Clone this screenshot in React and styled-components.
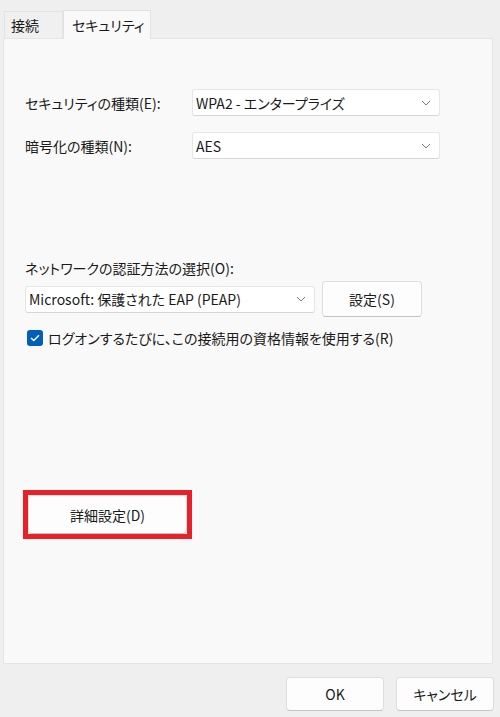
import React from "react";
import styled, { createGlobalStyle } from "styled-components";

const GlobalStyle = createGlobalStyle`
  html, body {
    margin: 0;
    padding: 0;
    background: #efefef;
    font-family: "Noto Sans CJK JP", "Noto Sans", sans-serif;
    font-feature-settings: "palt";
    font-size: 14px;
    color: #1a1a1a;
  }
`;

const Dialog = styled.div`
  width: 500px;
  height: 717px;
  display: flex;
  flex-direction: column;
  box-sizing: border-box;
`;

const TabStrip = styled.div`
  display: flex;
  align-items: flex-end;
  height: 38px;
  padding-left: 4px;
`;

const Tab = styled.div`
  box-sizing: border-box;
  min-width: ${(p) => (p.active ? "80px" : "59px")};
  height: ${(p) => (p.active ? "29px" : "27px")};
  padding: 0 6px 0 ${(p) => (p.active ? "8px" : "6px")};
  display: flex;
  align-items: center;
  white-space: nowrap;
  background: ${(p) => (p.active ? "#f9f9f9" : "#f0f0f0")};
  border: 1px solid #e2e2e2;
  border-bottom: none;
  margin-bottom: ${(p) => (p.active ? "-1px" : "0")};
  position: relative;
  z-index: ${(p) => (p.active ? 2 : 1)};
  color: #1a1a1a;
`;

const Panel = styled.div`
  box-sizing: border-box;
  height: 626px;
  margin: 0 7px 0 3px;
  background: #f9f9f9;
  border: 1px solid #e4e4e4;
  padding: 50px 0 0 21px;
  display: flex;
  flex-direction: column;
`;

const FieldGrid = styled.div`
  display: grid;
  grid-template-columns: 167px 248px;
  row-gap: 16px;
  align-items: center;
`;

const Label = styled.div`
  line-height: 20px;
  white-space: nowrap;
`;

const SelectBox = styled.div`
  box-sizing: border-box;
  width: ${(p) => p.width || "248px"};
  height: 27px;
  background: #ffffff;
  border: 1px solid #e6e6e6;
  border-bottom-color: #d6d6d6;
  border-radius: 3px;
  display: flex;
  align-items: center;
  justify-content: space-between;
  padding: 0 8px 0 3px;
  white-space: nowrap;
`;

const Chevron = () => (
  <svg width="10" height="6" viewBox="0 0 10 6">
    <path d="M1 1 L5 5 L9 1" fill="none" stroke="#7a7a7a" strokeWidth="1" />
  </svg>
);

const AuthSection = styled.div`
  margin-top: 99px;
  display: flex;
  flex-direction: column;
`;

const AuthRow = styled.div`
  display: flex;
  align-items: center;
  gap: 7px;
  margin-top: 3px;
`;

const Button = styled.button`
  box-sizing: border-box;
  width: ${(p) => p.width || "100px"};
  height: ${(p) => p.height || "36px"};
  background: #fdfdfd;
  border: 1px solid #dedede;
  border-bottom-color: #c4c4c4;
  border-radius: 4px;
  font-family: inherit;
  font-feature-settings: "palt";
  font-size: 14px;
  color: #1a1a1a;
  padding: 0;
`;

const CheckRow = styled.div`
  display: flex;
  align-items: center;
  gap: 5px;
  margin-top: 11px;
  margin-left: 2px;
`;

const CheckBox = styled.div`
  width: 16px;
  height: 16px;
  border-radius: 3px;
  background: #005fb8;
  display: flex;
  align-items: center;
  justify-content: center;
`;

const Highlight = styled.div`
  align-self: flex-start;
  margin-top: 142px;
  margin-left: -2px;
  border: 5px solid #e8202a;
  display: flex;
`;

const Footer = styled.div`
  display: flex;
  justify-content: flex-end;
  gap: 12px;
  padding: 13px 6px 0 0;
`;

export default function App() {
  return (
    <>
      <GlobalStyle />
      <Dialog>
        <TabStrip>
          <Tab>接続</Tab>
          <Tab active>セキュリティ</Tab>
        </TabStrip>
        <Panel>
          <FieldGrid>
            <Label>セキュリティの種類(E):</Label>
            <SelectBox>
              <span>WPA2 - エンタープライズ</span>
              <Chevron />
            </SelectBox>
            <Label>暗号化の種類(N):</Label>
            <SelectBox>
              <span>AES</span>
              <Chevron />
            </SelectBox>
          </FieldGrid>

          <AuthSection>
            <Label>ネットワークの認証方法の選択(O):</Label>
            <AuthRow>
              <SelectBox width="290px">
                <span>Microsoft: 保護された EAP (PEAP)</span>
                <Chevron />
              </SelectBox>
              <Button>設定(S)</Button>
            </AuthRow>
            <CheckRow>
              <CheckBox>
                <svg width="10" height="8" viewBox="0 0 10 8">
                  <path d="M1 4 L3.8 6.6 L9 1.2" fill="none" stroke="#fff" strokeWidth="1.4" />
                </svg>
              </CheckBox>
              <span>ログオンするたびに、この接続用の資格情報を使用する(R)</span>
            </CheckRow>
          </AuthSection>

          <Highlight>
            <Button width="159px" height="39px">詳細設定(D)</Button>
          </Highlight>
        </Panel>
        <Footer>
          <Button width="98px" height="34px">OK</Button>
          <Button width="98px" height="34px">キャンセル</Button>
        </Footer>
      </Dialog>
    </>
  );
}
